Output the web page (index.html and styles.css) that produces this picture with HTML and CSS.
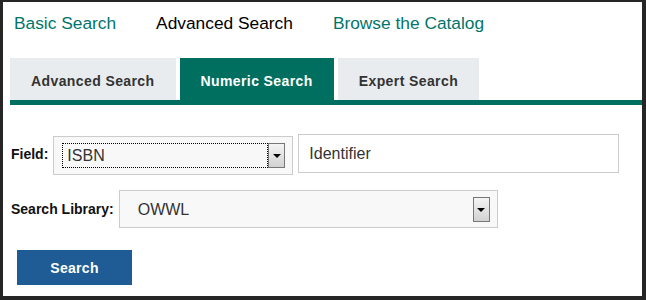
FILE: index.html
```html
<!DOCTYPE html>
<html lang="en">
<head>
    <meta charset="UTF-8">
    <title>Numeric Search</title>
    <link rel="stylesheet" href="styles.css">
</head>
<body>
    <div class="frame">
        <div class="topnav">
            <a class="navlink" href="#">Basic Search</a>
            <span class="navlink current">Advanced Search</span>
            <a class="navlink" href="#">Browse the Catalog</a>
        </div>

        <div class="tabs">
            <div class="tab">Advanced Search</div>
            <div class="tab active">Numeric Search</div>
            <div class="tab">Expert Search</div>
        </div>

        <div class="form">
            <div class="row">
                <label class="label">Field:</label>
                <div class="select field-select">
                    <div class="select-inner">
                        <div class="select-value focused">ISBN</div>
                        <div class="select-btn"><span class="arrow"></span></div>
                    </div>
                </div>
                <div class="textbox">Identifier</div>
            </div>

            <div class="row">
                <label class="label">Search Library:</label>
                <div class="select lib-select">
                    <div class="select-inner">
                        <div class="select-value">OWWL</div>
                        <div class="select-btn"><span class="arrow"></span></div>
                    </div>
                </div>
            </div>

            <button class="btn">Search</button>
        </div>
    </div>
</body>
</html>
```

FILE: styles.css
```css
body {
    margin: 0;
    font-family: "Liberation Sans", Arial, sans-serif;
    background: #fff;
}
.frame {
    box-sizing: border-box;
    width: 646px;
    height: 300px;
    border-style: solid;
    border-color: #262626;
    border-width: 2px 4px 4px 3px;
    padding-left: 7px;
    background: #fff;
}

/* top links */
.topnav {
    height: 56px;
    padding-top: 11px;
    padding-left: 4px;
    box-sizing: border-box;
    display: flex;
    gap: 40px;
    line-height: 20px;
}
.navlink {
    font-size: 13pt;
    color: #00756b;
    text-decoration: none;
}
.navlink.current { color: #000; }

/* tabs */
.tabs {
    display: flex;
    gap: 4px;
    border-bottom: 5px solid #006f5f;
}
.tab {
    height: 42px;
    box-sizing: border-box;
    padding: 4px 21px 0;
    line-height: 38px;
    font-size: 14px;
    font-weight: bold;
    letter-spacing: 0.4px;
    color: #333;
    background: #e9ecef;
}
.tab.active {
    background: #006f5f;
    color: #fff;
}

/* form */
.form {
    padding: 27px 0 0 1px;
}
.row {
    display: flex;
    align-items: center;
    margin-bottom: 15px;
}
.label {
    font-size: 14px;
    font-weight: bold;
    color: #111;
    margin-right: 5px;
}
.select {
    box-sizing: border-box;
    border: 1px solid #ccc;
    background: #f8f8f8;
    padding: 6px 7px 6px 8px;
}
.field-select {
    width: 240px;
    height: 39px;
    margin-top: 4px;
}
.lib-select {
    width: 379px;
    height: 38px;
}
.select-inner {
    display: flex;
    height: 25px;
}
.select-value {
    flex: 1;
    box-sizing: border-box;
    padding-left: 4px;
    line-height: 23px;
    font-size: 16px;
    color: #333;
    border: 1px solid transparent;
}
.select-value.focused { border: 1px dotted #000; }
.lib-select .select-value { padding-left: 9px; }
.select-btn {
    box-sizing: border-box;
    width: 17px;
    border: 1px solid #777;
    background: linear-gradient(#f4f4f4, #d2d2d2);
    display: flex;
    align-items: center;
    justify-content: center;
}
.arrow {
    width: 0;
    height: 0;
    border-left: 4px solid transparent;
    border-right: 4px solid transparent;
    border-top: 4px solid #000;
}
.textbox {
    box-sizing: border-box;
    width: 321px;
    height: 39px;
    margin-left: 5px;
    border: 1px solid #ccc;
    background: #fff;
    padding-left: 10px;
    line-height: 37px;
    font-size: 16px;
    color: #333;
}
.btn {
    margin: 7px 0 0 6px;
    width: 115px;
    height: 35px;
    border: none;
    background: #1f5c96;
    color: #fff;
    font-family: "Liberation Sans", Arial, sans-serif;
    font-size: 14px;
    font-weight: bold;
    letter-spacing: 0.3px;
    cursor: pointer;
}
```
